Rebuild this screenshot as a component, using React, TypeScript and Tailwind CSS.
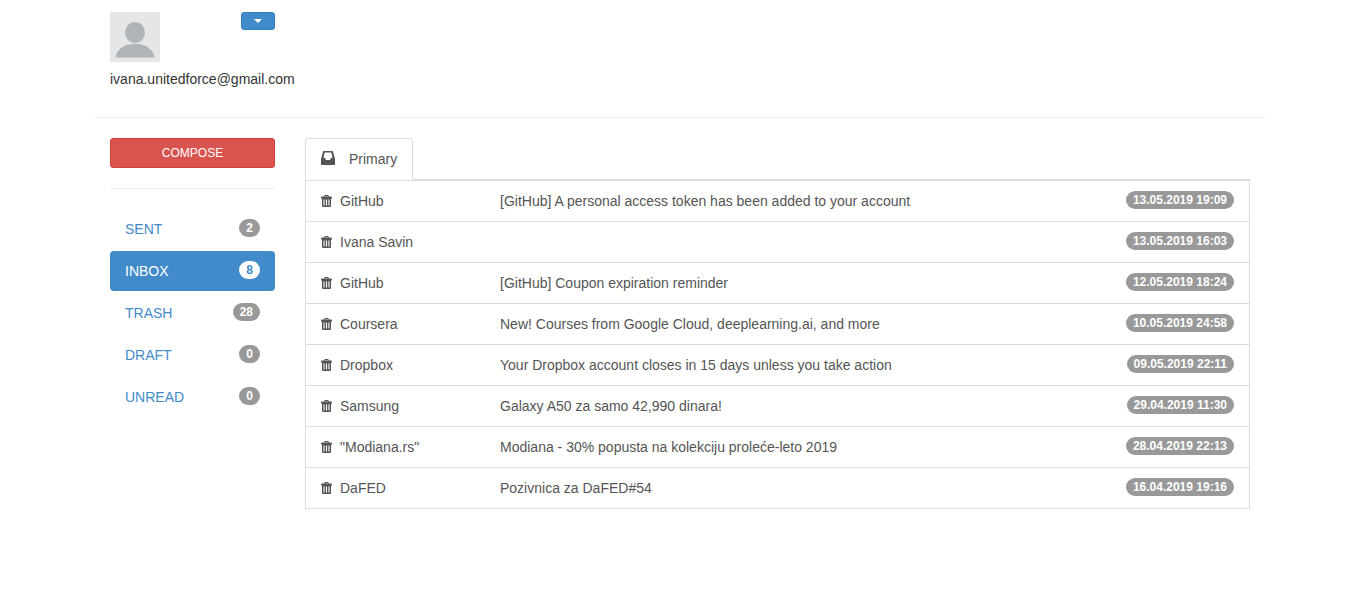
import React from "react";

type Folder = { name: string; count: number; active?: boolean };
type Mail = { from: string; subject: string; date: string };

const folders: Folder[] = [
  { name: "SENT", count: 2 },
  { name: "INBOX", count: 8, active: true },
  { name: "TRASH", count: 28 },
  { name: "DRAFT", count: 0 },
  { name: "UNREAD", count: 0 },
];

const mails: Mail[] = [
  { from: "GitHub", subject: "[GitHub] A personal access token has been added to your account", date: "13.05.2019 19:09" },
  { from: "Ivana Savin", subject: "", date: "13.05.2019 16:03" },
  { from: "GitHub", subject: "[GitHub] Coupon expiration reminder", date: "12.05.2019 18:24" },
  { from: "Coursera", subject: "New! Courses from Google Cloud, deeplearning.ai, and more", date: "10.05.2019 24:58" },
  { from: "Dropbox", subject: "Your Dropbox account closes in 15 days unless you take action", date: "09.05.2019 22:11" },
  { from: "Samsung", subject: "Galaxy A50 za samo 42,990 dinara!", date: "29.04.2019 11:30" },
  { from: "\"Modiana.rs\"", subject: "Modiana - 30% popusta na kolekciju proleće-leto 2019", date: "28.04.2019 22:13" },
  { from: "DaFED", subject: "Pozivnica za DaFED#54", date: "16.04.2019 19:16" },
];

function Badge({ children, inverted }: { children: React.ReactNode; inverted?: boolean }) {
  return (
    <span
      className={
        "shrink-0 rounded-[10px] px-[7px] py-[3px] text-center text-xs leading-3 font-bold whitespace-nowrap " +
        (inverted ? "bg-white text-[#428bca]" : "bg-[#999] text-white")
      }
    >
      {children}
    </span>
  );
}

function Avatar() {
  return (
    <svg width="50" height="50" viewBox="0 0 50 50" role="img" aria-label="Profile photo">
      <rect width="50" height="50" fill="#e4e6e8" />
      <ellipse cx="25" cy="20.5" rx="10" ry="10.5" fill="#aeb4b8" />
      <path d="M5.5 45.5C6.5 37 15 31.8 25 31.8S43.500 37 44.500 45.500Z" fill="#aeb4b8" />
    </svg>
  );
}

function InboxIcon() {
  return (
    <svg width="14" height="14" viewBox="0 0 14 14" fill="currentColor" aria-hidden="true">
      <path
        fillRule="evenodd"
        d="M2.700 0H11.300Q11.900 0 12 .6L14 8V13.300Q14 14 13.300 14H.7Q0 14 0 13.300V8L2 .6Q2.100 0 2.700 0ZM3.600 1.500 2.600 7H4.100L5 9H9L9.900 7H11.400L10.400 1.500Z"
      />
    </svg>
  );
}

function TrashIcon() {
  return (
    <svg width="11" height="12" viewBox="0 0 11 12" fill="currentColor" aria-hidden="true">
      <path
        fillRule="evenodd"
        d="M3.300 1.500V1Q3.300 0 4.300 0H6.700Q7.700 0 7.700 1V1.500H10Q11 1.500 11 2.500V3.400H0V2.500Q0 1.500 1 1.500ZM4.300 1V1.500H6.700V1ZM1 3.400H10V11Q10 12 9 12H2Q1 12 1 11ZM2.500 4.400V10.500H3.600V4.400ZM4.950 4.400V10.500H6.050V4.400ZM7.400 4.400V10.500H8.500V4.400Z"
      />
    </svg>
  );
}

export default function App() {
  return (
    <div className="bg-white pr-px font-['Liberation_Sans',Arial,sans-serif] text-sm leading-5 text-[#333]">
      <div className="mx-auto max-w-[1170px] pt-3">
        <header className="flex px-[15px] pb-7">
          <div className="w-[131px]">
            <Avatar />
            <p className="mt-[7px] whitespace-nowrap">ivana.unitedforce@gmail.com</p>
          </div>
          <button
            type="button"
            aria-label="Account menu"
            className="flex h-[18px] w-[34px] items-center justify-center rounded-[3px] border border-[#357ebd] bg-[#428bca]"
          >
            <svg width="8" height="4" viewBox="0 0 8 4" fill="#fff" aria-hidden="true">
              <path d="M0 0H8L4 4Z" />
            </svg>
          </button>
        </header>
        <hr className="border-[#eee]" />
        <div className="flex pt-5">
          <aside className="w-1/6 px-[15px]">
            <button
              type="button"
              className="block h-[30px] w-full rounded-[3px] border border-[#d43f3a] bg-[#d9534f] text-xs text-white"
            >
              COMPOSE
            </button>
            <hr className="my-5 border-[#eee]" />
            <nav aria-label="Folders">
              <ul className="flex flex-col gap-[2px]">
                {folders.map((f) => (
                  <li key={f.name}>
                    <a
                      href="#"
                      aria-current={f.active ? "page" : undefined}
                      className={
                        "flex items-start justify-between rounded px-[15px] py-[10px] " +
                        (f.active ? "bg-[#428bca] text-white" : "text-[#428bca]")
                      }
                    >
                      {f.name}
                      <Badge inverted={f.active}>{f.count}</Badge>
                    </a>
                  </li>
                ))}
              </ul>
            </nav>
          </aside>
          <main className="w-5/6 px-[15px]">
            <div className="flex border-b border-[#ddd]">
              <a
                href="#"
                aria-current="page"
                className="-mb-px flex gap-[14px] rounded-t border border-b-0 border-[#ddd] bg-white px-[15px] pt-[10px] pb-[11px] text-[#555]"
              >
                <span className="pt-[2px]">
                  <InboxIcon />
                </span>
                Primary
              </a>
            </div>
            <ul className="border border-[#ddd] text-[#555]">
              {mails.map((m) => (
                <li key={m.date} className="flex items-start border-b border-[#ddd] px-[15px] py-[10px] last:border-b-0">
                  <button type="button" aria-label={"Delete mail from " + m.from} className="w-[19px] pt-1">
                    <TrashIcon />
                  </button>
                  <a href="#" className="flex min-w-0 grow items-start">
                    <span className="w-40 shrink-0">{m.from}</span>
                    <span className="grow">{m.subject}</span>
                    <Badge>{m.date}</Badge>
                  </a>
                </li>
              ))}
            </ul>
          </main>
        </div>
      </div>
    </div>
  );
}
